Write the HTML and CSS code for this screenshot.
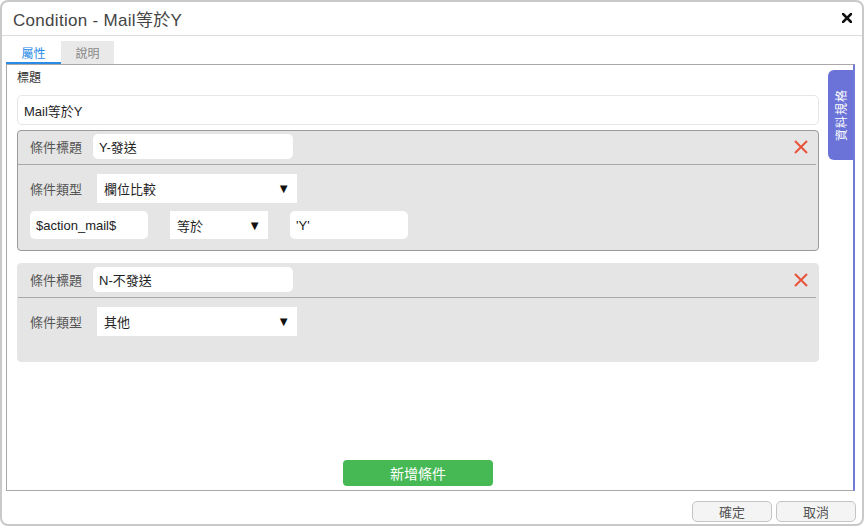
FILE: index.html
```html
<!DOCTYPE html>
<html lang="zh-Hant">
<head>
  <meta charset="UTF-8" />
  <title>Condition - Mail等於Y</title>
  <link rel="stylesheet" href="styles.css">
</head>
<body>
  <div class="dialog">
    <div class="titlebar">
      <span class="title">Condition - Mail等於Y</span>
      <svg class="close" width="10" height="10" viewBox="0 0 10 10"><path d="M1 1L9 9M9 1L1 9" stroke="#111" stroke-width="2.6" stroke-linecap="square"/></svg>
    </div>

    <div class="main">
      <div class="tabs">
        <div class="tab active">屬性</div>
        <div class="tab">說明</div>
      </div>

      <div class="panel">
        <div class="field-label">標題</div>
        <div class="box wide">Mail等於Y</div>

        <div class="card selected">
          <div class="card-head">
            <span class="lbl">條件標題</span>
            <div class="box head-box">Y-發送</div>
            <svg class="remove" width="14" height="14" viewBox="0 0 14 14"><path d="M1 1L13 13M13 1L1 13" stroke="#e8533a" stroke-width="2"/></svg>
          </div>
          <div class="card-row">
            <span class="lbl">條件類型</span>
            <div class="select type-select"><span>欄位比較</span><span class="arrow">▼</span></div>
          </div>
          <div class="card-row compare">
            <div class="box small">$action_mail$</div>
            <div class="select op-select"><span>等於</span><span class="arrow">▼</span></div>
            <div class="box small">'Y'</div>
          </div>
        </div>

        <div class="card loose">
          <div class="card-head">
            <span class="lbl">條件標題</span>
            <div class="box head-box">N-不發送</div>
            <svg class="remove" width="14" height="14" viewBox="0 0 14 14"><path d="M1 1L13 13M13 1L1 13" stroke="#e8533a" stroke-width="2"/></svg>
          </div>
          <div class="card-row">
            <span class="lbl">條件類型</span>
            <div class="select type-select"><span>其他</span><span class="arrow">▼</span></div>
          </div>
        </div>

        <button class="add-btn">新增條件</button>

        <div class="side-tab"><span>資料規格</span></div>
      </div>
    </div>

    <div class="footer">
      <button class="btn">確定</button>
      <button class="btn">取消</button>
    </div>
  </div>
</body>
</html>
```

FILE: styles.css
```css
* { box-sizing: border-box; }
body { margin: 0; font-family: "Liberation Sans", "Noto Sans CJK TC", sans-serif; background: #fff; }

.dialog { width: 864px; height: 526px; border: 2px solid #c9c9c9; border-radius: 8px; background: #fff; display: flex; flex-direction: column; }

.titlebar { height: 34px; border-bottom: 1px solid #dcdcdc; display: flex; align-items: center; justify-content: space-between; padding: 0 10px 0 11px; }
.title { font-size: 17px; color: #444; letter-spacing: 0.3px; }
.close { margin-top: -1px; }

.main { padding: 5px 7px 0 4px; }
.tabs { display: flex; height: 23px; }
.tab { width: 53px; font-size: 12px; color: #888; background: #e9e9e9; display: flex; align-items: center; justify-content: center; }
.tab.active { width: 55px; background: #fff; color: #2a8be6; border-bottom: 2px solid #2a8be6; padding-top: 2px; }

.panel { position: relative; height: 427px; border: 1px solid #a9a9a9; border-right: 2px solid #7179d9; padding: 5px 34px 4px 10px; display: flex; flex-direction: column; }
.field-label { font-size: 12px; color: #333; line-height: 16px; }

.box { background: #fff; border-radius: 5px; font-size: 13px; color: #222; display: flex; align-items: center; padding-left: 6px; }
.box.wide { height: 30px; margin-top: 9px; border: 1px solid #e6e6e6; }

.card { margin-top: 5px; background: #e5e5e5; border: 1px solid #e5e5e5; border-radius: 4px; padding-bottom: 11px; }
.card.selected { border-color: #9a9a9a; }
.card.loose { margin-top: 12px; padding-bottom: 25px; }

.card-head { display: flex; align-items: center; padding: 3px 0 5px 12px; margin-right: 2px; border-bottom: 1px solid #a9a9a9; }
.lbl { font-size: 13px; color: #555; width: 63px; }
.head-box { width: 200px; height: 25px; }
.remove { margin-left: auto; margin-right: 8px; }

.card-row { display: flex; align-items: center; padding: 9px 0 0 12px; }
.card-row .lbl { width: 67px; }
.card-row.compare { padding-top: 8px; gap: 22px; }

.select { background: #fff; height: 29px; font-size: 13px; color: #222; display: flex; align-items: center; justify-content: space-between; padding: 0 7px 0 7px; }
.type-select { width: 200px; }
.op-select { width: 98px; height: 28px; }
.arrow { font-size: 13px; color: #111; }
.box.small { width: 118px; height: 28px; }

.add-btn { margin: auto auto 0 auto; width: 150px; height: 26px; border: none; border-radius: 4px; background: #46b955; color: #fff; font-family: inherit; font-size: 14px; }

.side-tab { position: absolute; top: 5px; right: 0; width: 25px; height: 90px; background: #6b73d8; border-radius: 6px 0 0 6px; display: flex; align-items: center; justify-content: center; }
.side-tab span { writing-mode: vertical-rl; text-orientation: sideways; transform: rotate(180deg); color: #fff; font-size: 12px; letter-spacing: 1px; }

.footer { display: flex; justify-content: flex-end; gap: 4px; padding: 10px 6px 0 0; }
.btn { width: 80px; height: 21px; border: 1px solid #c4c4c4; border-radius: 5px; background: #f4f4f4; color: #555; font-family: inherit; font-size: 13px; padding: 0; }
```
